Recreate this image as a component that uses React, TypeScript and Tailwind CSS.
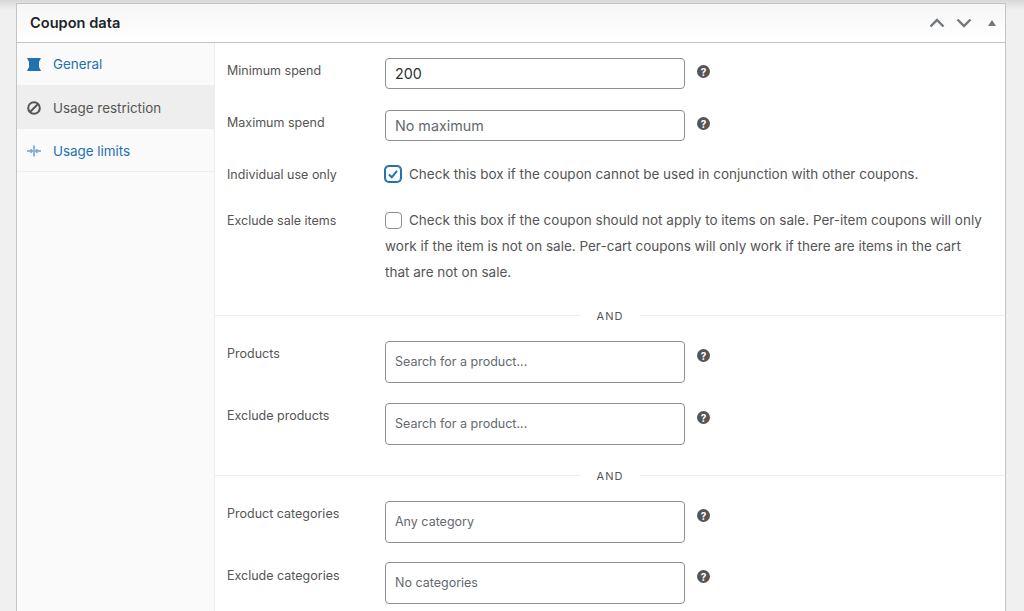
const HelpTip = ({ top = "mt-[8px]" }: { top?: string }) => (
  <span className={`ml-[12px] flex h-[13px] w-[13px] items-center justify-center rounded-full bg-[#555] text-[10px] font-bold leading-none text-white ${top}`}>
    ?
  </span>
);

const TicketIcon = () => (
  <svg width="14" height="13" viewBox="0 0 14 13" className="fill-[#2271b1]">
    <path d="M0 0h14l-2 4v5l2 4H0l2-4V4z" />
  </svg>
);

const BlockedIcon = () => (
  <svg width="14" height="14" viewBox="0 0 14 14" fill="none" className="stroke-[#555]" strokeWidth="2">
    <circle cx="7" cy="7" r="5.800" />
    <path d="M3 11l8-8" />
  </svg>
);

const LimitsIcon = () => (
  <svg width="14" height="12" viewBox="0 0 14 12" fill="none" className="stroke-[#2271b1]" strokeWidth="1">
    <path d="M7 0.500v11M0 6h4.500M14 6H9.500" />
    <path d="M3.500 4l2 2-2 2M10.500 4l-2 2 2 2" />
  </svg>
);

const tabs = [
  { label: "General", icon: <TicketIcon />, className: "h-[42px] pt-[12px] text-[#2271b1]" },
  { label: "Usage restriction", icon: <BlockedIcon />, className: "h-[44px] pt-[14px] bg-[#eee] text-[#555]" },
  { label: "Usage limits", icon: <LimitsIcon />, className: "h-[43px] pt-[13px] text-[#2271b1] border-b border-[#eee]" },
];

const Row = ({
  label,
  h,
  top = "pt-[4px]",
  children,
}: {
  label: string;
  h: string;
  top?: string;
  children: React.ReactNode;
}) => (
  <div className={`flex ${h}`}>
    <div className={`w-[170px] shrink-0 pl-[12px] text-[12.500px] leading-[18px] text-[#555] ${top}`}>{label}</div>
    {children}
  </div>
);

const TextField = ({ value, dark }: { value: string; dark?: boolean }) => (
  <div
    className={`flex h-[31px] w-[300px] items-center rounded-[4px] border border-[#8c8f94] bg-white px-[9px] text-[14.300px] ${
      dark ? "text-[#2c3338]" : "text-[#646970]"
    }`}
  >
    {value}
  </div>
);

const SearchField = ({ value }: { value: string }) => (
  <div className="flex h-[42px] w-[300px] items-center rounded-[4px] border border-[#8c8f94] bg-white px-[9px] pt-[1px] text-[12.500px] text-[#646970]">
    {value}
  </div>
);

const Divider = () => (
  <div className="flex h-[1px] items-center bg-[#eee]">
    <span className="ml-[365px] w-[60px] bg-white text-center text-[11px] leading-[14px] tracking-[1px] text-[#555]">
      AND
    </span>
  </div>
);

export default function App() {
  return (
    <div className="h-[611px] w-[1024px] overflow-hidden bg-gradient-to-b from-[#d8d8d8] to-[#f0f0f1] to-[10px] pl-[16px] pt-[3px] font-['Inter',sans-serif]">
      <div className="w-[990px] border border-[#c3c4c7] bg-white">
        <div className="flex h-[39px] items-center justify-between border-b border-[#c3c4c7] bg-gradient-to-b from-[#f6f6f6] to-white pl-[13px] pr-[9px]">
          <h2 className="translate-y-[1px] text-[14.600px] font-semibold text-[#1d2327]">Coupon data</h2>
          <div className="flex items-center text-[#72777c]">
            <svg width="16" height="10" viewBox="0 0 16 10" fill="none" className="stroke-[#72777c]" strokeWidth="2.400">
              <path d="M1.500 8.500L8 2l6.500 6.500" />
            </svg>
            <svg width="16" height="10" viewBox="0 0 16 10" fill="none" className="ml-[11px] stroke-[#72777c]" strokeWidth="2.400">
              <path d="M1.500 1.500L8 8l6.500-6.500" />
            </svg>
            <span className="ml-[16px] h-0 w-0 border-x-[4px] border-b-[6px] border-x-transparent border-b-[#72777c]" />
          </div>
        </div>
        <div className="flex h-[600px]">
          <ul className="w-[198px] shrink-0 border-r border-[#eee] bg-[#fafafa]">
            {tabs.map((tab) => (
              <li
                key={tab.label}
                className={`flex gap-[12px] pl-[10px] text-[13.400px] leading-[18px] ${tab.className}`}
              >
                <span className="flex h-[18px] w-[14px] items-center justify-center">{tab.icon}</span>
                {tab.label}
              </li>
            ))}
          </ul>
          <div className="flex-1 pt-[15px]">
            <Row label="Minimum spend" h="h-[52px]">
              <TextField value="200" dark />
              <HelpTip top="mt-[7px]" />
            </Row>
            <Row label="Maximum spend" h="h-[50px]">
              <TextField value="No maximum" />
              <HelpTip top="mt-[7px]" />
            </Row>
            <Row label="Individual use only" h="h-[46px]" top="pt-[6px]">
              <div className="flex h-[18px] translate-y-[5px] items-center gap-[8px] text-[13.500px] text-[#555]">
                <span className="flex h-[16px] w-[16px] items-center justify-center rounded-[4px] border border-[#2271b1] bg-white shadow-[0_0_0_1px_#2271b1]">
                  <svg width="12" height="12" viewBox="0 0 12 12" fill="none" className="stroke-[#2271b1]" strokeWidth="2">
                    <path d="M2 6.500l2.800 2.800L10 2.800" />
                  </svg>
                </span>
                Check this box if the coupon cannot be used in conjunction with other coupons.
              </div>
            </Row>
            <Row label="Exclude sale items" h="h-[109px]" top="pt-[6px]">
              <div className="w-[600px] pt-[1px] text-[13.500px] leading-[26px] text-[#555]">
                <span className="mr-[7px] inline-block h-[17px] w-[17px] translate-y-[4px] rounded-[4px] border border-[#8c8f94] bg-white" />
                Check this box if the coupon should not apply to items on sale. Per-item coupons will only work if the item is not on sale. Per-cart coupons will only work if there are items in the cart that are not on sale.
              </div>
            </Row>
            <Divider />
            <div className="pt-[25px]">
              <Row label="Products" h="h-[62px]">
                <SearchField value="Search for a product..." />
                <HelpTip />
              </Row>
              <Row label="Exclude products" h="h-[72px]">
                <SearchField value="Search for a product..." />
                <HelpTip />
              </Row>
            </div>
            <Divider />
            <div className="pt-[25px]">
              <Row label="Product categories" h="h-[61px]">
                <SearchField value="Any category" />
                <HelpTip />
              </Row>
              <Row label="Exclude categories" h="h-[62px]" top="pt-[5px]">
                <SearchField value="No categories" />
                <HelpTip />
              </Row>
            </div>
          </div>
        </div>
      </div>
    </div>
  );
}
